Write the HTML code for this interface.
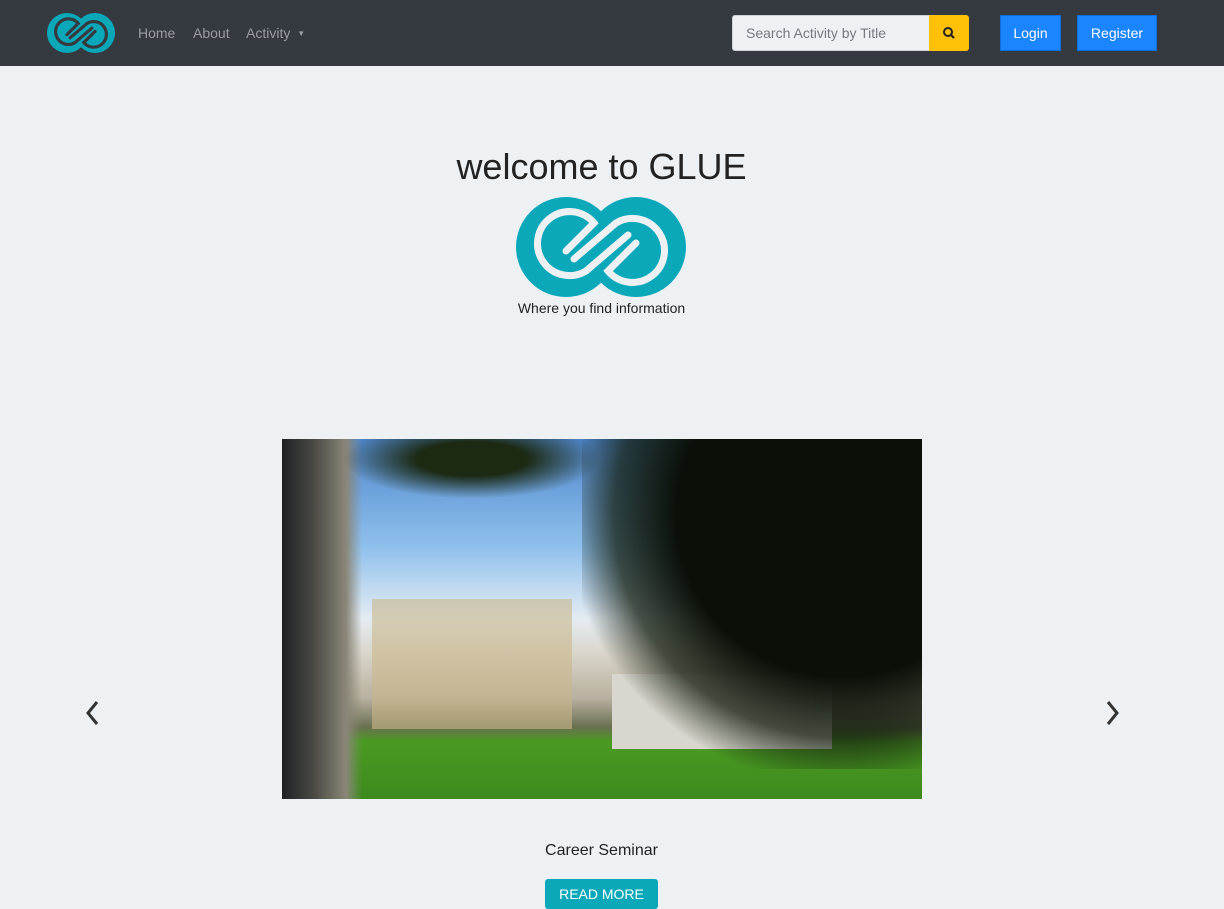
<!DOCTYPE html>
<html><head><style>
body{margin:0;width:1224px;height:894px;overflow:hidden;background:#eef1f4;font-family:"Liberation Sans",sans-serif;position:relative}
nav{position:absolute;left:0;top:0;width:1224px;height:66px;background:#343a40}
.nl{position:absolute;top:25px;color:#9a9da0;font-size:14px}
.btn{position:absolute;top:15px;height:36px;background:#1a85ff;color:#fff;font-size:14px;line-height:34px;text-align:center;border:1px solid #0d6edb;box-sizing:border-box}
.arrow{position:absolute;top:700px;width:14px;height:26px}
</style></head><body>
<nav>
<svg style="position:absolute;left:47px;top:13px" width="68" height="40" viewBox="0 0 170 100">
<g fill="#0aa8b9"><ellipse cx="50" cy="50" rx="50" ry="50"/><ellipse cx="120" cy="50" rx="50" ry="50"/></g>
<g fill="none" stroke="#343a40" stroke-width="8" stroke-linecap="round"><path d="M50,54 L78,26 A32,32 0 1 0 70,74 L112,38"/><path d="M120,46 L92,74 A32,32 0 1 0 100,26 L58,62"/></g>
</svg>
<span class="nl" style="left:138px">Home</span>
<span class="nl" style="left:193px">About</span>
<span class="nl" style="left:246px">Activity <span style="font-size:8px;position:relative;top:-2px;margin-left:3px">▼</span></span>
<div style="position:absolute;left:732px;top:15px;width:198px;height:36px;background:#eef1f4;border:1px solid #ced4da;box-sizing:border-box;border-radius:3px 0 0 3px;color:#757a80;font-size:14px;line-height:34px;padding-left:13px">Search Activity by Title</div>
<div style="position:absolute;left:929px;top:15px;width:40px;height:36px;background:#ffc107;border-radius:0 3px 3px 0">
<svg width="40" height="36"><circle cx="19" cy="17" r="4" fill="none" stroke="#222" stroke-width="2"/><path d="M22 20l3 3" stroke="#222" stroke-width="2.2"/></svg></div>
<div class="btn" style="left:1000px;width:61px">Login</div>
<div class="btn" style="left:1077px;width:80px">Register</div>
</nav>
<div style="position:absolute;left:0;width:1203px;top:146px;text-align:center;font-size:36px;color:#222">welcome to GLUE</div>
<svg style="position:absolute;left:516px;top:197px" width="170" height="100" viewBox="0 0 170 100">
<g fill="#0aa8b9"><ellipse cx="50" cy="50" rx="50" ry="50"/><ellipse cx="120" cy="50" rx="50" ry="50"/></g>
<g fill="none" stroke="#eef1f4" stroke-width="7" stroke-linecap="round"><path d="M50,54 L78,26 A32,32 0 1 0 70,74 L112,38"/><path d="M120,46 L92,74 A32,32 0 1 0 100,26 L58,62"/></g>
</svg>
<div style="position:absolute;left:0;width:1203px;top:300px;text-align:center;font-size:14px;color:#222">Where you find information</div>
<div style="position:absolute;left:282px;top:439px;width:640px;height:360px;overflow:hidden;background:linear-gradient(180deg,#4f86cc 0%,#8fc0ec 30%,#e4ecf3 50%,#d8d4c8 60%,#b8b0a0 72%,#6a7050 80%,#4a9a22 84%,#3d8a1d 100%)">
<div style="position:absolute;left:90px;top:160px;width:200px;height:130px;background:#c9b88a;opacity:.6"></div>
<div style="position:absolute;left:330px;top:235px;width:220px;height:75px;background:#d8d6ce"></div>
<div style="position:absolute;left:0;top:0;width:80px;height:360px;background:linear-gradient(90deg,#1e2224,#4a4a44 40%,#8a8678 80%,transparent)"></div>
<div style="position:absolute;left:300px;top:-60px;width:400px;height:390px;background:radial-gradient(ellipse at 65% 35%,#0a1008 45%,rgba(20,30,15,.75) 62%,transparent 75%)"></div>
<div style="position:absolute;left:60px;top:-20px;width:260px;height:80px;background:radial-gradient(ellipse,#1c2a14 30%,transparent 70%)"></div>
</div>
<svg class="arrow" style="left:85px" viewBox="0 0 14 26"><path d="M12 2L3 13l9 11" fill="none" stroke="#333" stroke-width="3"/></svg>
<svg class="arrow" style="left:1106px" viewBox="0 0 14 26"><path d="M2 2l9 11-9 11" fill="none" stroke="#333" stroke-width="3"/></svg>
<div style="position:absolute;left:0;width:1203px;top:842px;text-align:center;font-size:16px;color:#222">Career Seminar</div>
<div style="position:absolute;left:545px;top:879px;width:113px;height:30px;background:#0aa8b9;border-radius:3px;color:#fff;font-size:14px;text-align:center;line-height:30px">READ MORE</div>
</body></html>
